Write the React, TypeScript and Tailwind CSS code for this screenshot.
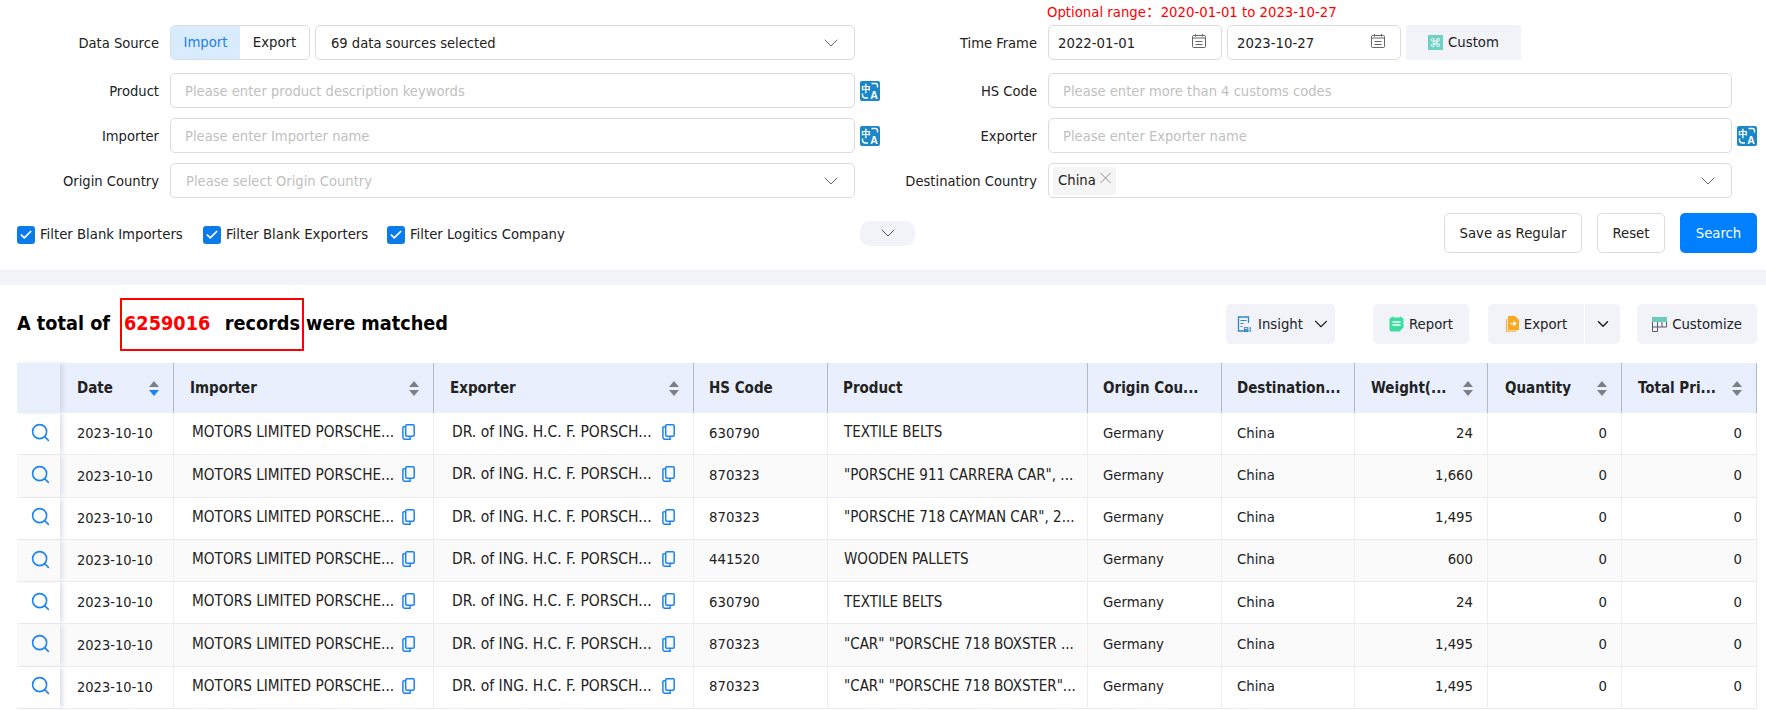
import { useState } from 'react';
import type { ReactNode } from 'react';
import { Check, ChevronDown, Command, Search, X } from 'lucide-react';

const gridCols =
  'grid grid-cols-[43px_114px_260px_260px_134px_260px_134px_133px_133px_134px_135px]';

const rows = [
  { hs: '630790', product: 'TEXTILE BELTS', weight: '24' },
  { hs: '870323', product: '"PORSCHE 911 CARRERA CAR", ...', weight: '1,660' },
  { hs: '870323', product: '"PORSCHE 718 CAYMAN CAR", 2...', weight: '1,495' },
  { hs: '441520', product: 'WOODEN PALLETS', weight: '600' },
  { hs: '630790', product: 'TEXTILE BELTS', weight: '24' },
  { hs: '870323', product: '"CAR" "PORSCHE 718 BOXSTER ...', weight: '1,495' },
  { hs: '870323', product: '"CAR" "PORSCHE 718 BOXSTER"...', weight: '1,495' },
];

function TranslateIcon() {
  return (
    <svg width="20" height="20" viewBox="0 0 20 20" className="shrink-0 overflow-visible">
      <rect width="20" height="20" rx="2" fill="#1b87c9" />
      <text x="5.8" y="10.5" fontSize="9.5" fontWeight="700" fill="#fff" textAnchor="middle" fontFamily="'Noto Sans CJK SC', sans-serif">中</text>
      <text x="14" y="17.5" fontSize="10.5" fontWeight="700" fill="#fff" textAnchor="middle" fontFamily="'Liberation Sans', sans-serif">A</text>
      <path d="M11.5 2.5h4a2 2 0 0 1 2 2v2M2.5 12.5v1.5a3 3 0 0 0 3 3h2.5" fill="none" stroke="#fff" strokeWidth="1.4" />
    </svg>
  );
}

function CalendarIcon() {
  return (
    <svg width="16" height="15" viewBox="0 0 16 15" fill="none" stroke="#666" strokeWidth="1" className="shrink-0">
      <rect x="1.5" y="1.5" width="13" height="12" rx="1" />
      <path d="M1.5 4h13M4.5 7.5h7M4.5 10.5h7M4.5 0v2.5M11.5 0v2.5" />
    </svg>
  );
}

function CopyIcon() {
  return (
    <svg width="13" height="16" viewBox="0 0 13 16" fill="none" stroke="#1c84f0" strokeWidth="1.5" className="-mt-[3px] shrink-0">
      <rect x="3.7" y="0.8" width="8.5" height="11.5" rx="1.2" />
      <path d="M3.7 2.8H1.9a1 1 0 0 0-1 1v9.5a2 2 0 0 0 2 2h5.2v-3" />
    </svg>
  );
}

function SortIcon({ active }: { active?: boolean }) {
  return (
    <svg width="10" height="15" viewBox="0 0 10 15" className="shrink-0">
      <path d="M5 0l5 6H0z" fill="#7d7f86" />
      <path d="M0 9h10l-5 6z" fill={active ? '#1c84f0' : '#7d7f86'} />
    </svg>
  );
}

function InsightIcon() {
  return (
    <svg width="16" height="16" viewBox="0 0 16 16" className="shrink-0 overflow-visible">
      <path d="M11 15H1.5V1h10v6" fill="none" stroke="#2f86c4" strokeWidth="1.3" />
      <path d="M3.5 4.5h6M3.5 7.5h3M3.5 10.5h2" stroke="#2f86c4" strokeWidth="1.2" />
      <text x="6.5" y="15.5" fontSize="7.5" fontWeight="700" fill="#2f86c4" fontFamily="'Liberation Sans', sans-serif">BI</text>
    </svg>
  );
}

function ReportIcon() {
  return (
    <svg width="15" height="16" viewBox="0 0 15 16" className="shrink-0">
      <path d="M2.5 1.5h10a2 2 0 0 1 2 2v8l-4 4h-8a2 2 0 0 1-2-2v-10a2 2 0 0 1 2-2z" fill="#3ddc9f" />
      <path d="M3.5 0.5v2M11.5 0.5v2" stroke="#3ddc9f" strokeWidth="1.4" />
      <path d="M3.5 6h8M3.5 9h8" stroke="#fff" strokeWidth="1.3" />
    </svg>
  );
}

function ExportIcon() {
  return (
    <svg width="14" height="16" viewBox="0 0 14 16" className="shrink-0">
      <path d="M1.5 3v12.2h10" fill="none" stroke="#f7b13a" strokeWidth="1.2" />
      <path d="M3 0h7l4 4v10H3z" fill="#f9a825" />
      <path d="M5.5 7.7h5M8.5 5.5l2.3 2.2-2.3 2.2" fill="none" stroke="#fff" strokeWidth="1.2" />
    </svg>
  );
}

function CustomizeIcon() {
  return (
    <svg width="15" height="15" viewBox="0 0 15 15" className="shrink-0">
      <rect width="15" height="5" fill="#6ccabd" />
      <path d="M.5 5v9.5h5V5M.5 10h9.5M5.5 5v5M10 5v5M14.5 5v5H10" fill="none" stroke="#55596a" strokeWidth="1" />
    </svg>
  );
}

function FormRow({ label, labelWidth, icon, children }: { label: string; labelWidth: string; icon?: boolean; children: ReactNode }) {
  return (
    <div className="flex h-[35px] items-center">
      <div className={`${labelWidth} shrink-0 pt-[1px] text-right text-[14.6px]`}>{label}</div>
      <div className="ml-[11px] flex h-full min-w-0 flex-1 gap-[5px]">{children}</div>
      <div className="flex w-[25px] shrink-0 justify-end">{icon && <TranslateIcon />}</div>
    </div>
  );
}

function TextField({ placeholder }: { placeholder: string }) {
  return (
    <input
      readOnly
      placeholder={placeholder}
      className="h-full w-full rounded-[5px] border border-[#dcdcdc] bg-white pl-[14px] text-[14.6px] outline-none placeholder:text-[#bfbfbf]"
    />
  );
}

function SelectField({ children }: { children: ReactNode }) {
  return (
    <div className="flex h-full min-w-0 flex-1 items-center rounded-[5px] border border-[#dcdcdc] bg-white pl-[15px] pr-[11px]">
      <div className="flex-1 text-[14.6px]">{children}</div>
      <ChevronDown size={24} strokeWidth={1} className="text-[#666]" />
    </div>
  );
}

function DateField({ value }: { value: string }) {
  return (
    <div className="flex h-full w-[174px] items-center justify-between rounded-[5px] border border-[#dcdcdc] pl-[9px] pr-[14px]">
      <span className="pt-[2px]">{value}</span>
      <span className="-mt-[3px]"><CalendarIcon /></span>
    </div>
  );
}

function FilterCheck({ label, width }: { label: string; width: string }) {
  const [checked, setChecked] = useState(true);
  return (
    <label className={`flex ${width} items-center gap-[5px]`}>
      <button
        type="button"
        onClick={() => setChecked(!checked)}
        className="flex h-[18px] w-[18px] items-center justify-center rounded-[3px] bg-[#0a7be8]"
      >
        {checked && <Check size={14} strokeWidth={3} className="text-white" />}
      </button>
      {label}
    </label>
  );
}

function ToolButton({ className, children }: { className: string; children: ReactNode }) {
  return <button type="button" className={`flex h-[40px] items-center gap-[5px] bg-[#f1f3f9] ${className}`}>{children}</button>;
}

function HeadCell({ label, pad, sort, active }: { label: string; pad: string; sort?: boolean; active?: boolean }) {
  return (
    <div className={`flex items-center justify-between border-r border-[#b4b8c8] pr-[14px] text-[15px] font-bold ${pad}`}>
      <span className="whitespace-nowrap">{label}</span>
      {sort && <SortIcon active={active} />}
    </div>
  );
}

function CompanyCell({ name, size }: { name: string; size: string }) {
  return (
    <div className="flex items-center border-r border-[#eeeeee] pl-[18px]">
      <span className={`w-[210px] whitespace-nowrap pb-[2px] ${size}`}>{name}</span>
      <CopyIcon />
    </div>
  );
}

function Cell({ children, className = '' }: { children: ReactNode; className?: string }) {
  return <div className={`flex items-center whitespace-nowrap border-r border-[#eeeeee] pb-[2px] ${className}`}>{children}</div>;
}

export default function App() {
  const [source, setSource] = useState('Import');

  return (
    <div className="h-[710px] w-[1766px] overflow-hidden bg-white font-['DejaVu_Sans_Condensed','DejaVu_Sans','Noto_Sans_CJK_SC',sans-serif] text-[14.75px] text-[#222]">
      <section className="pl-[17px] pr-[9px] pb-[17px]">
        <div className="flex h-[25px] items-center pl-[1030px] text-[#ff0000]">
          Optional range：2020-01-01 to 2023-10-27
        </div>
        <div className="grid grid-cols-[863px_877px] gap-y-[10px]">
          <FormRow label="Data Source" labelWidth="w-[142px]">
            <div className="flex h-full w-[140px] shrink-0 overflow-hidden rounded-[5px] border border-[#dcdcdc]">
              {['Import', 'Export'].map((item) => (
                <button
                  key={item}
                  type="button"
                  onClick={() => setSource(item)}
                  className={source === item ? 'flex-1 bg-[#d9ecff] text-[#1a7ff0]' : 'flex-1 bg-white'}
                >
                  {item}
                </button>
              ))}
            </div>
            <SelectField>69 data sources selected</SelectField>
          </FormRow>
          <FormRow label="Time Frame" labelWidth="w-[157px]">
            <DateField value="2022-01-01" />
            <DateField value="2023-10-27" />
            <button type="button" className="flex h-full w-[115px] items-center justify-center gap-[5px] rounded-[3px] bg-[#f1f3f9]">
              <span className="flex h-[15px] w-[15px] items-center justify-center bg-[#6fd0c4]">
                <Command size={11} strokeWidth={2} className="text-white" />
              </span>
              Custom
            </button>
          </FormRow>

          <div className="mt-[3px]">
            <FormRow label="Product" labelWidth="w-[142px]" icon>
              <TextField placeholder="Please enter product description keywords" />
            </FormRow>
          </div>
          <div className="mt-[3px]">
            <FormRow label="HS Code" labelWidth="w-[157px]">
              <TextField placeholder="Please enter more than 4 customs codes" />
            </FormRow>
          </div>

          <FormRow label="Importer" labelWidth="w-[142px]" icon>
            <TextField placeholder="Please enter Importer name" />
          </FormRow>
          <FormRow label="Exporter" labelWidth="w-[157px]" icon>
            <TextField placeholder="Please enter Exporter name" />
          </FormRow>

          <FormRow label="Origin Country" labelWidth="w-[142px]">
            <SelectField><span className="text-[#bfbfbf]">Please select Origin Country</span></SelectField>
          </FormRow>
          <FormRow label="Destination Country" labelWidth="w-[157px]">
            <div className="flex h-full flex-1 items-center rounded-[5px] border border-[#dcdcdc] pl-[4px] pr-[11px]">
              <span className="flex h-[28px] w-[63px] items-center justify-between rounded-[3px] bg-[#f5f5f5] pl-[5px] pr-[1px]">
                China
                <X size={20} strokeWidth={1} className="-mt-[6px] text-[#777]" />
              </span>
              <span className="flex-1" />
              <ChevronDown size={24} strokeWidth={1} className="text-[#666]" />
            </div>
          </FormRow>
        </div>

        <div className="mt-[15px] flex h-[40px] items-center">
          <div className="flex w-[843px] pt-[3px]">
            <FilterCheck label="Filter Blank Importers" width="w-[186px]" />
            <FilterCheck label="Filter Blank Exporters" width="w-[184px]" />
            <FilterCheck label="Filter Logitics Company" width="w-[200px]" />
          </div>
          <button type="button" className="flex h-[25px] w-[55px] items-center justify-center rounded-[10px] bg-[#f1f3f9]">
            <ChevronDown size={24} strokeWidth={1} className="text-[#555]" />
          </button>
          <div className="ml-auto flex gap-[15px]">
            <button type="button" className="h-[40px] w-[138px] rounded-[5px] border border-[#dcdcdc]">Save as Regular</button>
            <button type="button" className="h-[40px] w-[68px] rounded-[5px] border border-[#dcdcdc]">Reset</button>
            <button type="button" className="h-[40px] w-[77px] rounded-[5px] bg-[#0080ff] text-white">Search</button>
          </div>
        </div>
      </section>

      <div className="h-[15px] bg-[#f1f3f9]" />

      <section className="pl-[17px] pr-[9px]">
        <div className="flex h-[78px] items-center">
          <h2 className="flex items-center whitespace-nowrap text-[19.7px] font-bold text-black">
            A total of
            <span className="ml-[10px] mr-[2px] flex h-[53px] w-[184px] items-center justify-between border-2 border-[#ff0000] pl-[2px] pr-[2px]">
              <span className="text-[#ff0000]">6259016</span>
              <span>records</span>
            </span>
            were matched
          </h2>
          <div className="ml-auto flex items-center">
            <ToolButton className="w-[109px] rounded-[5px] pl-[11px]">
              <InsightIcon />
              Insight
              <ChevronDown size={22} strokeWidth={1.2} className="ml-[2px]" />
            </ToolButton>
            <ToolButton className="ml-[38px] w-[96px] justify-center rounded-[5px]">
              <ReportIcon />
              Report
            </ToolButton>
            <ToolButton className="ml-[19px] w-[96px] justify-center rounded-l-[5px]">
              <ExportIcon />
              Export
            </ToolButton>
            <ToolButton className="ml-[1px] w-[35px] justify-center rounded-r-[5px]">
              <ChevronDown size={18} strokeWidth={2} />
            </ToolButton>
            <ToolButton className="ml-[17px] w-[120px] justify-center rounded-[5px]">
              <CustomizeIcon />
              Customize
            </ToolButton>
          </div>
        </div>

        <div>
          <div className={`${gridCols} h-[50px] bg-[#e9effc]`}>
            <div className="relative z-10 shadow-[4px_0_4px_-1px_#d5d8e6]" />
            <HeadCell label="Date" pad="pl-[17px]" sort active />
            <HeadCell label="Importer" pad="pl-[16px]" sort />
            <HeadCell label="Exporter" pad="pl-[16px]" sort />
            <HeadCell label="HS Code" pad="pl-[15px]" />
            <HeadCell label="Product" pad="pl-[15px]" />
            <HeadCell label="Origin Cou..." pad="pl-[15px]" />
            <HeadCell label="Destination..." pad="pl-[15px]" />
            <HeadCell label="Weight(..." pad="pl-[16px]" sort />
            <HeadCell label="Quantity" pad="pl-[17px]" sort />
            <HeadCell label="Total Pri..." pad="pl-[16px]" sort />
          </div>
          {rows.map((row, i) => (
            <div key={i} className={`${gridCols} h-[42.3px] border-b border-[#ebebeb] ${i % 2 === 1 ? 'bg-[#fafafa]' : 'bg-white'}`}>
              <div className="relative z-10 flex items-center pl-[13px] shadow-[4px_0_4px_-1px_#e0e3ee]">
                <Search size={21} strokeWidth={1.8} className="-mt-[3px] text-[#1c84f0]" />
              </div>
              <Cell className="pl-[17px] pt-[3px] text-[14.5px]">2023-10-10</Cell>
              <CompanyCell name="MOTORS LIMITED PORSCHE..." size="text-[15.2px]" />
              <CompanyCell name="DR. of ING. H.C. F. PORSCH..." size="text-[15.5px]" />
              <Cell className="pl-[15px]">{row.hs}</Cell>
              <Cell className="pl-[16px] text-[15px]">{row.product}</Cell>
              <Cell className="pl-[15px]">Germany</Cell>
              <Cell className="pl-[15px]">China</Cell>
              <Cell className="justify-end pr-[14px]">{row.weight}</Cell>
              <Cell className="justify-end pr-[14px]">0</Cell>
              <Cell className="justify-end pr-[14px]">0</Cell>
            </div>
          ))}
        </div>
      </section>
    </div>
  );
}
